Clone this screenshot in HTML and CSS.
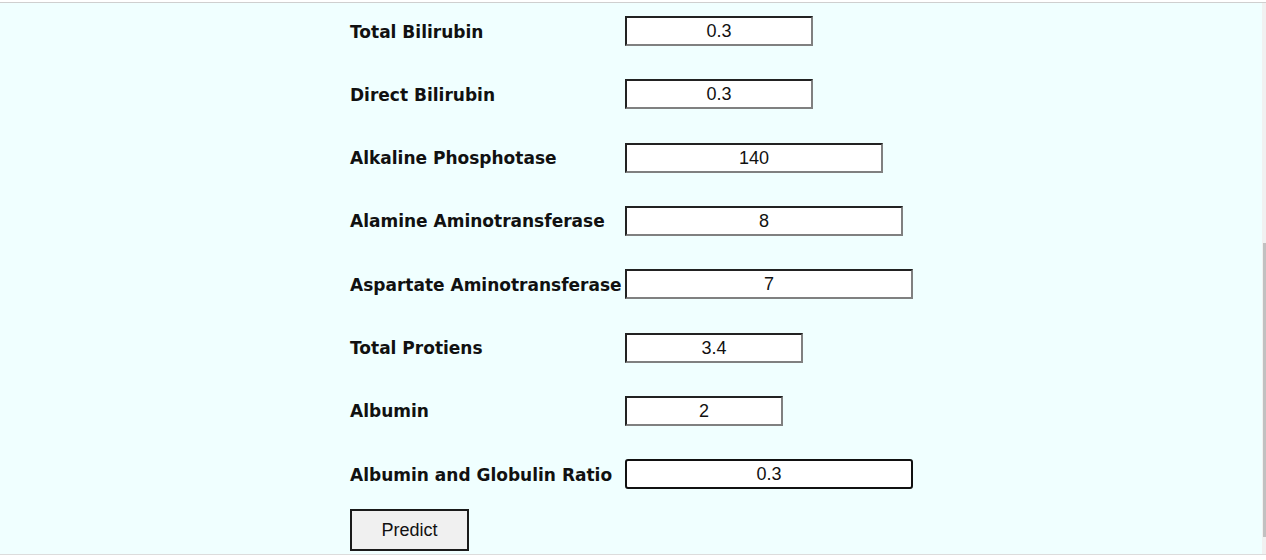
FILE: index.html
```html
<!DOCTYPE html>
<html>
<head>
<meta charset="utf-8">
<link rel="stylesheet" href="styles.css">
</head>
<body>
<div class="frame">
  <main class="page">
    <form class="form">
      <div class="row"><label class="lbl">Total Bilirubin</label><input class="field w186" value="0.3"></div>
      <div class="row"><label class="lbl">Direct Bilirubin</label><input class="field w186" value="0.3"></div>
      <div class="row"><label class="lbl">Alkaline Phosphotase</label><input class="field w256" value="140"></div>
      <div class="row"><label class="lbl">Alamine Aminotransferase</label><input class="field w276" value="8"></div>
      <div class="row"><label class="lbl">Aspartate Aminotransferase</label><input class="field w286" value="7"></div>
      <div class="row"><label class="lbl">Total Protiens</label><input class="field w176" value="3.4"></div>
      <div class="row"><label class="lbl">Albumin</label><input class="field w156" value="2"></div>
      <div class="row"><label class="lbl">Albumin and Globulin Ratio</label><input class="field w286 focused" value="0.3"></div>
      <div class="actions"><button type="button" class="btn">Predict</button></div>
    </form>
  </main>
  <div class="scrollbar"><div class="thumb"></div></div>
</div>
</body>
</html>
```
FILE: styles.css
```css
html, body {
  margin: 0;
  padding: 0;
  background: #ffffff;
  height: 560px;
  overflow: hidden;
}
body {
  padding-top: 2px;
  box-sizing: border-box;
}
.frame {
  display: flex;
  height: 551px;
  border-top: 1px solid #cfcfcf;
  border-bottom: 1px solid #dcdcdc;
  background: #f0ffff;
}
.page {
  flex: 1;
  padding: 13px 0 0 350px;
}
.form {
  display: flex;
  flex-direction: column;
  gap: 33.33px;
}
.row {
  display: grid;
  grid-template-columns: 276px auto;
  align-items: center;
  height: 30px;
}
.lbl {
  font-family: "DejaVu Sans", sans-serif;
  font-weight: bold;
  font-size: 17px;
  color: #111;
  white-space: nowrap;
  padding-top: 1px;
}
.field {
  box-sizing: border-box;
  height: 30px;
  margin: 0 0 0 -1px;
  padding: 1px 4px 0;
  border-style: solid;
  border-width: 2px;
  border-color: #222 #808080 #808080 #222;
  background: #fff;
  font-family: "Liberation Sans", Arial, sans-serif;
  font-size: 18px;
  color: #111;
  text-align: center;
}
.focused {
  border-color: #111;
  border-radius: 3px;
}
.w156 { width: 158px; }
.w176 { width: 178px; }
.w186 { width: 188px; }
.w256 { width: 258px; }
.w276 { width: 278px; }
.w286 { width: 288px; }
.actions {
  margin-top: -13.33px;
}
.btn {
  box-sizing: border-box;
  width: 119px;
  height: 42px;
  margin: 0;
  background: #f0f0f0;
  border: 2px solid #1a1a1a;
  font-family: "Liberation Sans", Arial, sans-serif;
  font-size: 18px;
  color: #111;
  padding: 0;
}
.scrollbar {
  width: 4px;
  background: #f1f1f1;
  display: flex;
  flex-direction: column;
  padding-top: 240px;
  box-sizing: border-box;
}
.thumb {
  height: 294px;
  margin: 0 0 0 1px;
  width: 3px;
  background: #c1c1c1;
}
```
